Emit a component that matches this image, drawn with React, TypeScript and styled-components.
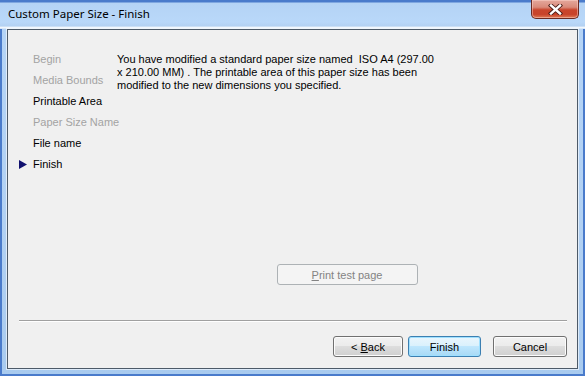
import React from "react";
import styled, { createGlobalStyle } from "styled-components";

const GlobalStyle = createGlobalStyle`
  html, body {
    margin: 0;
    padding: 0;
    background: #ffffff;
  }
  * {
    box-sizing: border-box;
  }
`;

type Step = { label: string; enabled: boolean; current?: boolean };

const steps: Step[] = [
  { label: "Begin", enabled: false },
  { label: "Media Bounds", enabled: false },
  { label: "Printable Area", enabled: true },
  { label: "Paper Size Name", enabled: false },
  { label: "File name", enabled: true },
  { label: "Finish", enabled: true, current: true },
];

const App: React.FC = () => {
  return (
    <>
      <GlobalStyle />
      <Window>
        <TitleBar>
          <Title>Custom Paper Size - Finish</Title>
          <CloseButton aria-label="Close">
            <svg width="15" height="11" viewBox="0 0 15 11">
              <path
                d="M3 1.5 L12 9.5 M12 1.5 L3 9.5"
                stroke="#4a1c16"
                strokeWidth="4.2"
                strokeLinecap="square"
                fill="none"
              />
              <path
                d="M3 1.5 L12 9.5 M12 1.5 L3 9.5"
                stroke="#ffffff"
                strokeWidth="2.4"
                strokeLinecap="square"
                fill="none"
              />
            </svg>
          </CloseButton>
        </TitleBar>
        <Client>
          <Body>
            <StepList>
              {steps.map((step, i) => (
                <StepItem key={`step-${i}`} $enabled={step.enabled}>
                  <Marker>
                    {step.current && (
                      <svg width="8" height="9" viewBox="0 0 8 9">
                        <path d="M0 0 L8 4.5 L0 9 Z" fill="#10106e" />
                      </svg>
                    )}
                  </Marker>
                  {step.label}
                </StepItem>
              ))}
            </StepList>
            <Content>
              <Message>
                <Line>You have modified a standard paper size named&nbsp; ISO A4 (297.00</Line>
                <Line>x 210.00 MM) . The printable area of this paper size has been</Line>
                <Line>modified to the new dimensions you specified.</Line>
              </Message>
              <TestRow>
                <PrintButton disabled>
                  <u>P</u>rint test page
                </PrintButton>
              </TestRow>
            </Content>
          </Body>
          <Separator />
          <Footer>
            <DialogButton $width={70}>
              &lt; <u>B</u>ack
            </DialogButton>
            <DialogButton $width={73} $default>
              Finish
            </DialogButton>
            <DialogButton $width={74} $gap={12}>
              Cancel
            </DialogButton>
          </Footer>
        </Client>
      </Window>
    </>
  );
};

const Window = styled.div`
  width: 585px;
  height: 376px;
  display: flex;
  flex-direction: column;
  padding: 0 7px 7px 7px;
  background: linear-gradient(
    180deg,
    #a8c8ee 0%,
    #b5d4f6 8%,
    #b2d1f3 60%,
    #a9cbef 100%
  );
  box-shadow: inset 2px 2px 0 #4a7bcb, inset -2px -2px 0 #4a7bcb;
  overflow: hidden;
`;

const TitleBar = styled.div`
  height: 29px;
  display: flex;
  align-items: center;
  margin: 0 -7px;
  padding-right: 6px;
  padding-left: 8px;
  background: linear-gradient(
    180deg,
    #4a7bcb 0px,
    #4a7bcb 2px,
    #b4d3f5 3px,
    #b9d8f9 22px,
    #b3d1f2 26px,
    #e4effa 27px,
    #ffffff 28px,
    #b3d1f2 29px
  );
`;

const Title = styled.span`
  font-family: "Noto Sans", "Open Sans", sans-serif;
  font-size: 11.5px;
  color: #000000;
  padding-bottom: 2px;
`;

const CloseButton = styled.button`
  margin-left: auto;
  align-self: flex-start;
  width: 48px;
  height: 19px;
  padding: 0;
  border: 1px solid #6b2a22;
  border-top: none;
  border-radius: 0 0 5px 5px;
  background: linear-gradient(
    180deg,
    #e4a89c 0%,
    #d98a7a 40%,
    #c9452c 55%,
    #c8432a 80%,
    #e07a55 100%
  );
  box-shadow: inset 0 0 0 1px rgba(255, 220, 210, 0.45);
  display: flex;
  align-items: center;
  justify-content: center;
`;

const Client = styled.div`
  flex: 1;
  display: flex;
  flex-direction: column;
  background: #f0f0f0;
  border: 1px solid #4d5a68;
  box-shadow: 0 0 0 1px rgba(255, 255, 255, 0.6);
`;

const Body = styled.div`
  flex: 1;
  display: flex;
  padding-top: 23px;
  padding-bottom: 35px;
`;

const StepList = styled.ul`
  list-style: none;
  margin: 0;
  padding: 0 0 0 11px;
  width: 109px;
  flex-shrink: 0;
`;

const StepItem = styled.li<{ $enabled: boolean }>`
  height: 21px;
  display: flex;
  align-items: flex-start;
  font-family: "Liberation Sans", Arial, sans-serif;
  font-size: 11px;
  line-height: 13px;
  white-space: nowrap;
  color: ${({ $enabled }) => ($enabled ? "#000000" : "#a3a3a3")};
`;

const Marker = styled.span`
  width: 14px;
  height: 13px;
  display: flex;
  align-items: center;
  flex-shrink: 0;
`;

const Content = styled.div`
  flex: 1;
  display: flex;
  flex-direction: column;
`;

const Message = styled.p`
  margin: 0;
  font-family: "Liberation Sans", Arial, sans-serif;
  font-size: 11px;
  line-height: 13px;
  color: #000000;
`;

const Line = styled.span`
  display: block;
  white-space: nowrap;
`;

const TestRow = styled.div`
  margin-top: auto;
  display: flex;
  justify-content: center;
`;

const PrintButton = styled.button`
  width: 141px;
  height: 21px;
  padding: 0;
  border: 1px solid #adb2b5;
  border-radius: 3px;
  background: #f4f4f4;
  font-family: "Liberation Sans", Arial, sans-serif;
  font-size: 11px;
  color: #838383;
`;

const Separator = styled.div`
  height: 2px;
  margin: 0 10px 0 11px;
  border-top: 1px solid #a0a0a0;
  border-bottom: 1px solid #ffffff;
`;

const Footer = styled.div`
  display: flex;
  justify-content: flex-end;
  padding: 14px 10px 11px 11px;
`;

const DialogButton = styled.button<{
  $width: number;
  $default?: boolean;
  $gap?: number;
}>`
  width: ${({ $width }) => $width}px;
  height: 21px;
  margin-left: ${({ $gap }) => $gap ?? 5}px;
  padding: 0;
  border-radius: 3px;
  font-family: "Liberation Sans", Arial, sans-serif;
  font-size: 11px;
  color: #000000;
  border: 1px solid ${({ $default }) => ($default ? "#3c7fb1" : "#707070")};
  background: ${({ $default }) =>
    $default
      ? "linear-gradient(180deg, #eaf6fd 0%, #d9f0fc 50%, #bee6fd 50%, #a7d9f5 100%)"
      : "linear-gradient(180deg, #f2f2f2 0%, #ebebeb 50%, #dddddd 50%, #cfcfcf 100%)"};
  box-shadow: inset 0 0 0 1px
    ${({ $default }) => ($default ? "#9fe0ff" : "#fcfcfc")};
`;

export default App;
